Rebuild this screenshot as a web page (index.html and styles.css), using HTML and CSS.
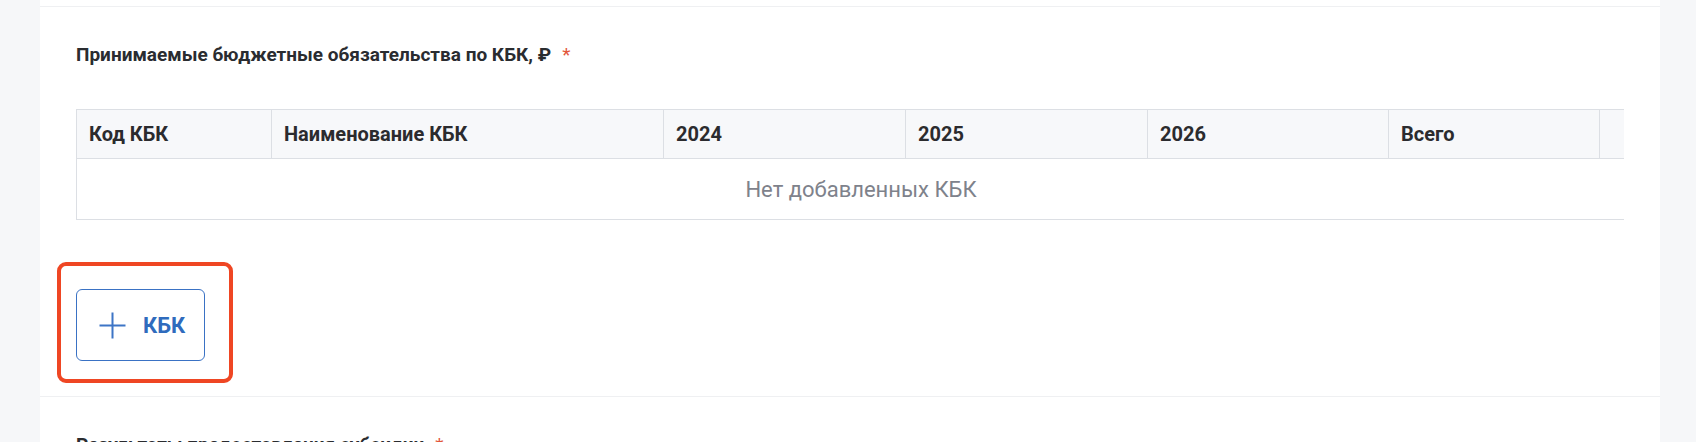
FILE: index.html
```html
<!DOCTYPE html>
<html lang="ru">
<head>
<meta charset="utf-8">
<title>КБК</title>
<link rel="stylesheet" href="styles.css">
</head>
<body>
<div class="page">
  <main class="card">
    <section class="section">
      <h2 class="section-title">Принимаемые бюджетные обязательства по КБК, ₽<span class="req">*</span></h2>
      <div class="table-wrap">
        <div class="kbk-table">
          <div class="th">Код КБК</div>
          <div class="th">Наименование КБК</div>
          <div class="th">2024</div>
          <div class="th">2025</div>
          <div class="th">2026</div>
          <div class="th">Всего</div>
          <div class="th"></div>
          <div class="empty">Нет добавленных КБК</div>
        </div>
      </div>
      <div class="highlight">
        <button class="add-btn" type="button">
          <svg class="plus" width="27" height="27" viewBox="0 0 27 27" aria-hidden="true"><path d="M13.5 0.5V26.5M0.5 13.5H26.5" stroke="currentColor" stroke-width="2" fill="none"/></svg>
          <span>КБК</span>
        </button>
      </div>
    </section>
    <section class="section">
      <h2 class="section-title">Результаты предоставления субсидии<span class="req">*</span></h2>
    </section>
  </main>
</div>
</body>
</html>
```

FILE: styles.css
```css
html, body {
  margin: 0;
  height: 100%;
  overflow: hidden;
}
body {
  background: #f6f7f9;
  font-family: Roboto, "Noto Sans", sans-serif;
  color: #2b2d31;
}
.page {
  height: 100%;
  padding: 0 36px 0 40px;
}
.card {
  background: #ffffff;
  height: 100%;
  padding-top: 6px;
  box-sizing: border-box;
}
.section {
  border-top: 1px solid #eff0f2;
  padding: 34px 36px 13px 36px;
}
.section-title {
  margin: 0;
  font-size: 19px;
  line-height: 28px;
  font-weight: 700;
  color: #2a2c30;
}
.req {
  color: #e2553a;
  font-weight: 400;
  margin-left: 11px;
}
.table-wrap {
  margin-top: 40px;
  overflow: hidden;
}
.kbk-table {
  display: grid;
  grid-template-columns: 195px 392px 242px 242px 241px 211px 46px;
  width: max-content;
  border-top: 1px solid #dcdfe4;
  border-left: 1px solid #dcdfe4;
}
.th {
  height: 49px;
  box-sizing: border-box;
  display: flex;
  align-items: center;
  padding-left: 12px;
  background: #f7f8fa;
  border-right: 1px solid #dcdfe4;
  border-bottom: 1px solid #dcdfe4;
  font-size: 20px;
  font-weight: 700;
  color: #2b2b2e;
}
.empty {
  grid-column: 1 / -1;
  height: 61px;
  box-sizing: border-box;
  display: flex;
  align-items: center;
  justify-content: center;
  border-bottom: 1px solid #dcdfe4;
  border-right: 1px solid #dcdfe4;
  font-size: 22px;
  color: #7e828b;
}
.highlight {
  display: inline-block;
  margin: 42px 0 0 -19px;
  padding: 23px 24px 18px 15px;
  border: 4px solid #ef4623;
  border-radius: 9px;
}
.add-btn {
  display: flex;
  align-items: center;
  gap: 17px;
  width: 129px;
  height: 72px;
  box-sizing: border-box;
  padding: 0 0 0 22px;
  background: #ffffff;
  border: 1px solid #3a72c4;
  border-radius: 6px;
  color: #2f6bbd;
  font-family: Roboto, "Noto Sans", sans-serif;
  font-size: 22px;
  font-weight: 700;
  cursor: pointer;
}
.plus {
  flex: none;
  color: #3d75c6;
}
```
